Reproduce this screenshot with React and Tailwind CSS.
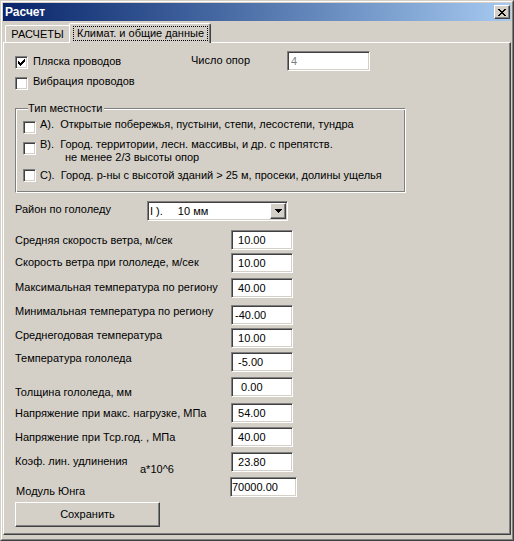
import React from 'react';

// Win2000-style edges
const sunken =
  'border border-t-[#808080] border-l-[#808080] border-r-white border-b-white shadow-[inset_1px_1px_0_#404040,inset_-1px_-1px_0_#d4d0c8]';
const raised =
  'border border-t-white border-l-white border-r-[#404040] border-b-[#404040] shadow-[inset_-1px_-1px_0_#808080]';

const CheckBox = ({ checked = false, className = '' }) => (
  <span className={`w-[13px] h-[13px] shrink-0 bg-white flex items-center justify-center ${sunken} ${className}`}>
    {checked && (
      <svg width="7" height="7" viewBox="0 0 7 7" shapeRendering="crispEdges">
        <path
          d="M6 0h1v1H6zM5 1h2v1H5zM0 2h1v1H0zM4 2h3v1H4zM0 3h2v1H0zM3 3h3v1H3zM0 4h5v1H0zM1 5h3v1H1zM2 6h1v1H2z"
          fill="#000"
        />
      </svg>
    )}
  </span>
);

const Field = ({ value, className = 'w-[62px]', pad = 'pl-[3px]', color = 'text-black' }) => (
  <div className={`h-[20px] shrink-0 bg-white flex items-center whitespace-pre ${sunken} ${pad} ${color} ${className}`}>
    {value}
  </div>
);

const FIELDS = [
  { label: 'Средняя скорость ветра, м/сек', value: ' 10.00', mt: 'mt-[9px]', lt: 'mt-[4px]' },
  { label: 'Скорость ветра при гололеде, м/сек', value: ' 10.00', mt: 'mt-[3px]', lt: 'mt-[3px]' },
  { label: 'Максимальная температура по региону', value: ' 40.00', mt: 'mt-[5px]', lt: 'mt-[3px]' },
  { label: 'Минимальная температура по региону', value: '-40.00', mt: 'mt-[7px]', lt: 'mt-0' },
  { label: 'Среднегодовая температура', value: ' 10.00', mt: 'mt-[3px]', lt: 'mt-[1px]' },
  { label: 'Температура гололеда', value: ' -5.00', mt: 'mt-[4px]', lt: 'mt-0' },
  { label: 'Толщина гололеда, мм', value: '  0.00', mt: 'mt-[5px]', lt: 'mt-[9px]' },
  { label: 'Напряжение при макс. нагрузке, МПа', value: ' 54.00', mt: 'mt-[6px]', lt: 'mt-[4px]' },
  { label: 'Напряжение при Тср.год. , МПа', value: ' 40.00', mt: 'mt-[4px]', lt: 'mt-[4px]' },
];

const FieldRow = ({ label, value, mt, lt }) => (
  <div className={`flex items-start h-[20px] ${mt}`}>
    <span className={`w-[216px] shrink-0 ${lt}`}>{label}</span>
    <Field value={value} />
  </div>
);

export default function App() {
  return (
    <div className="w-[514px] h-[541px] bg-[#d4d0c8] text-black text-[11px] leading-[13px] font-['Liberation_Sans',Arial,sans-serif] border border-t-[#d4d0c8] border-l-[#d4d0c8] border-r-[#404040] border-b-[#404040]">
      <div className="h-full flex flex-col p-px border border-t-white border-l-white border-r-[#808080] border-b-[#808080]">
        {/* Title bar */}
        <div className="h-[18px] shrink-0 flex items-center justify-between pl-[2px] pr-px bg-linear-to-r from-[#0a246a] to-[#a6caf0]">
          <span className="text-white font-bold text-[12px] leading-[14px]">Расчет</span>
          <button className={`w-[16px] h-[14px] bg-[#d4d0c8] flex items-center justify-center ${raised}`}>
            <svg width="8" height="7" viewBox="0 0 8 7" shapeRendering="crispEdges">
              <path
                d="M0 0h2v1H0zM6 0h2v1H6zM1 1h2v1H1zM5 1h2v1H5zM2 2h4v1H2zM3 3h2v1H3zM2 4h4v1H2zM1 5h2v1H1zM5 5h2v1H5zM0 6h2v1H0zM6 6h2v1H6z"
                fill="#000"
              />
            </svg>
          </button>
        </div>

        {/* Tabs */}
        <div className="h-[21px] shrink-0 flex items-end pl-[2px]">
          <div className="w-[64px] h-[17px] flex items-center justify-center border-t border-l border-t-white border-l-white rounded-tl-[2px]">
            РАСЧЕТЫ
          </div>
          <div className="relative z-10 w-[142px] h-[20px] -mb-px flex items-start pl-[3px] pt-[2px] bg-[#d4d0c8] border-t border-l border-r border-t-white border-l-white border-r-[#404040] shadow-[inset_-1px_0_0_#808080] rounded-t-[2px]">
            <span className="w-[135px] h-[15px] flex items-center justify-center border border-dotted border-black">
              Климат. и общие данные
            </span>
          </div>
        </div>

        {/* Tab page */}
        <div className={`flex-1 mb-[3px] pt-[8px] pl-[11px] ${raised.replace('shadow-[inset_-1px_-1px_0_#808080]', '')} shadow-[inset_-1px_-1px_0_#808080]`}>
          <div className="flex items-start h-[20px]">
            <div className="w-[176px] flex items-start">
              <CheckBox checked className="mt-[5px]" />
              <span className="ml-[5px] mt-[4px]">Пляска проводов</span>
            </div>
            <span className="w-[96px] mt-[3px]">Число опор</span>
            <Field value="4" className="w-[83px]" color="text-[#808080]" />
          </div>

          <div className="flex items-start h-[15px] mt-[4px]">
            <CheckBox className="mt-[2px]" />
            <span className="ml-[5px]">Вибрация проводов</span>
          </div>

          <fieldset className="mt-[12px] w-[391px] h-[91px] pl-[7px] pt-[3px] border border-t-[#808080] border-l-[#808080] border-r-white border-b-white shadow-[inset_1px_1px_0_#fff,inset_-1px_-1px_0_#808080]">
            <legend className="ml-[5px] pr-px bg-[#d4d0c8]">Тип местности</legend>
            <div className="flex items-start h-[16px]">
              <CheckBox className="mt-[3px]" />
              <span className="ml-[4px] whitespace-pre">А).  Открытые побережья, пустыни, степи, лесостепи, тундра</span>
            </div>
            <div className="flex items-start h-[26px] mt-[4px]">
              <CheckBox className="mt-[4px]" />
              <div className="ml-[4px] flex flex-col">
                <span className="whitespace-pre">В).  Город. территории, лесн. массивы, и др. с препятств.</span>
                <span className="pl-[25px]">не менее 2/3 высоты опор</span>
              </div>
            </div>
            <div className="flex items-start h-[13px] mt-[5px]">
              <CheckBox className="mt-0" />
              <span className="ml-[4px] whitespace-pre">С).  Город. р-ны с высотой зданий &gt; 25 м, просеки, долины ущелья</span>
            </div>
          </fieldset>

          <div className="flex items-start h-[20px] mt-[8px]">
            <span className="w-[132px] shrink-0 mt-[2px]">Район по гололеду</span>
            <div className={`w-[141px] h-[20px] p-px bg-white flex items-center ${sunken}`}>
              <span className="flex-1 pl-[1px] whitespace-pre">
                I ).<span className="ml-[15px]">10 мм</span>
              </span>
              <span className={`w-[16px] h-[16px] bg-[#d4d0c8] flex items-center justify-center ${raised}`}>
                <svg width="7" height="4" viewBox="0 0 7 4" shapeRendering="crispEdges">
                  <path d="M0 0h7v1H0zM1 1h5v1H1zM2 2h3v1H2zM3 3h1v1H3z" fill="#000" />
                </svg>
              </span>
            </div>
          </div>

          {FIELDS.map((f) => (
            <FieldRow key={f.label} {...f} />
          ))}

          <div className="flex items-start h-[20px] mt-[5px]">
            <div className="w-[216px] shrink-0 flex items-start">
              <span className="w-[125px] shrink-0 mt-[3px]">Коэф. лин. удлинения</span>
              <span className="mt-[11px]">а*10^6</span>
            </div>
            <Field value=" 23.80" />
          </div>

          <div className="flex items-start h-[20px] mt-[5px]">
            <span className="w-[215px] shrink-0 mt-[8px] pl-px">Модуль Юнга</span>
            <Field value="70000.00" className="w-[67px]" pad="pl-[1px]" />
          </div>

          <button className={`mt-[5px] w-[145px] h-[25px] bg-[#d4d0c8] flex items-center justify-center ${raised}`}>
            Сохранить
          </button>
        </div>
      </div>
    </div>
  );
}
